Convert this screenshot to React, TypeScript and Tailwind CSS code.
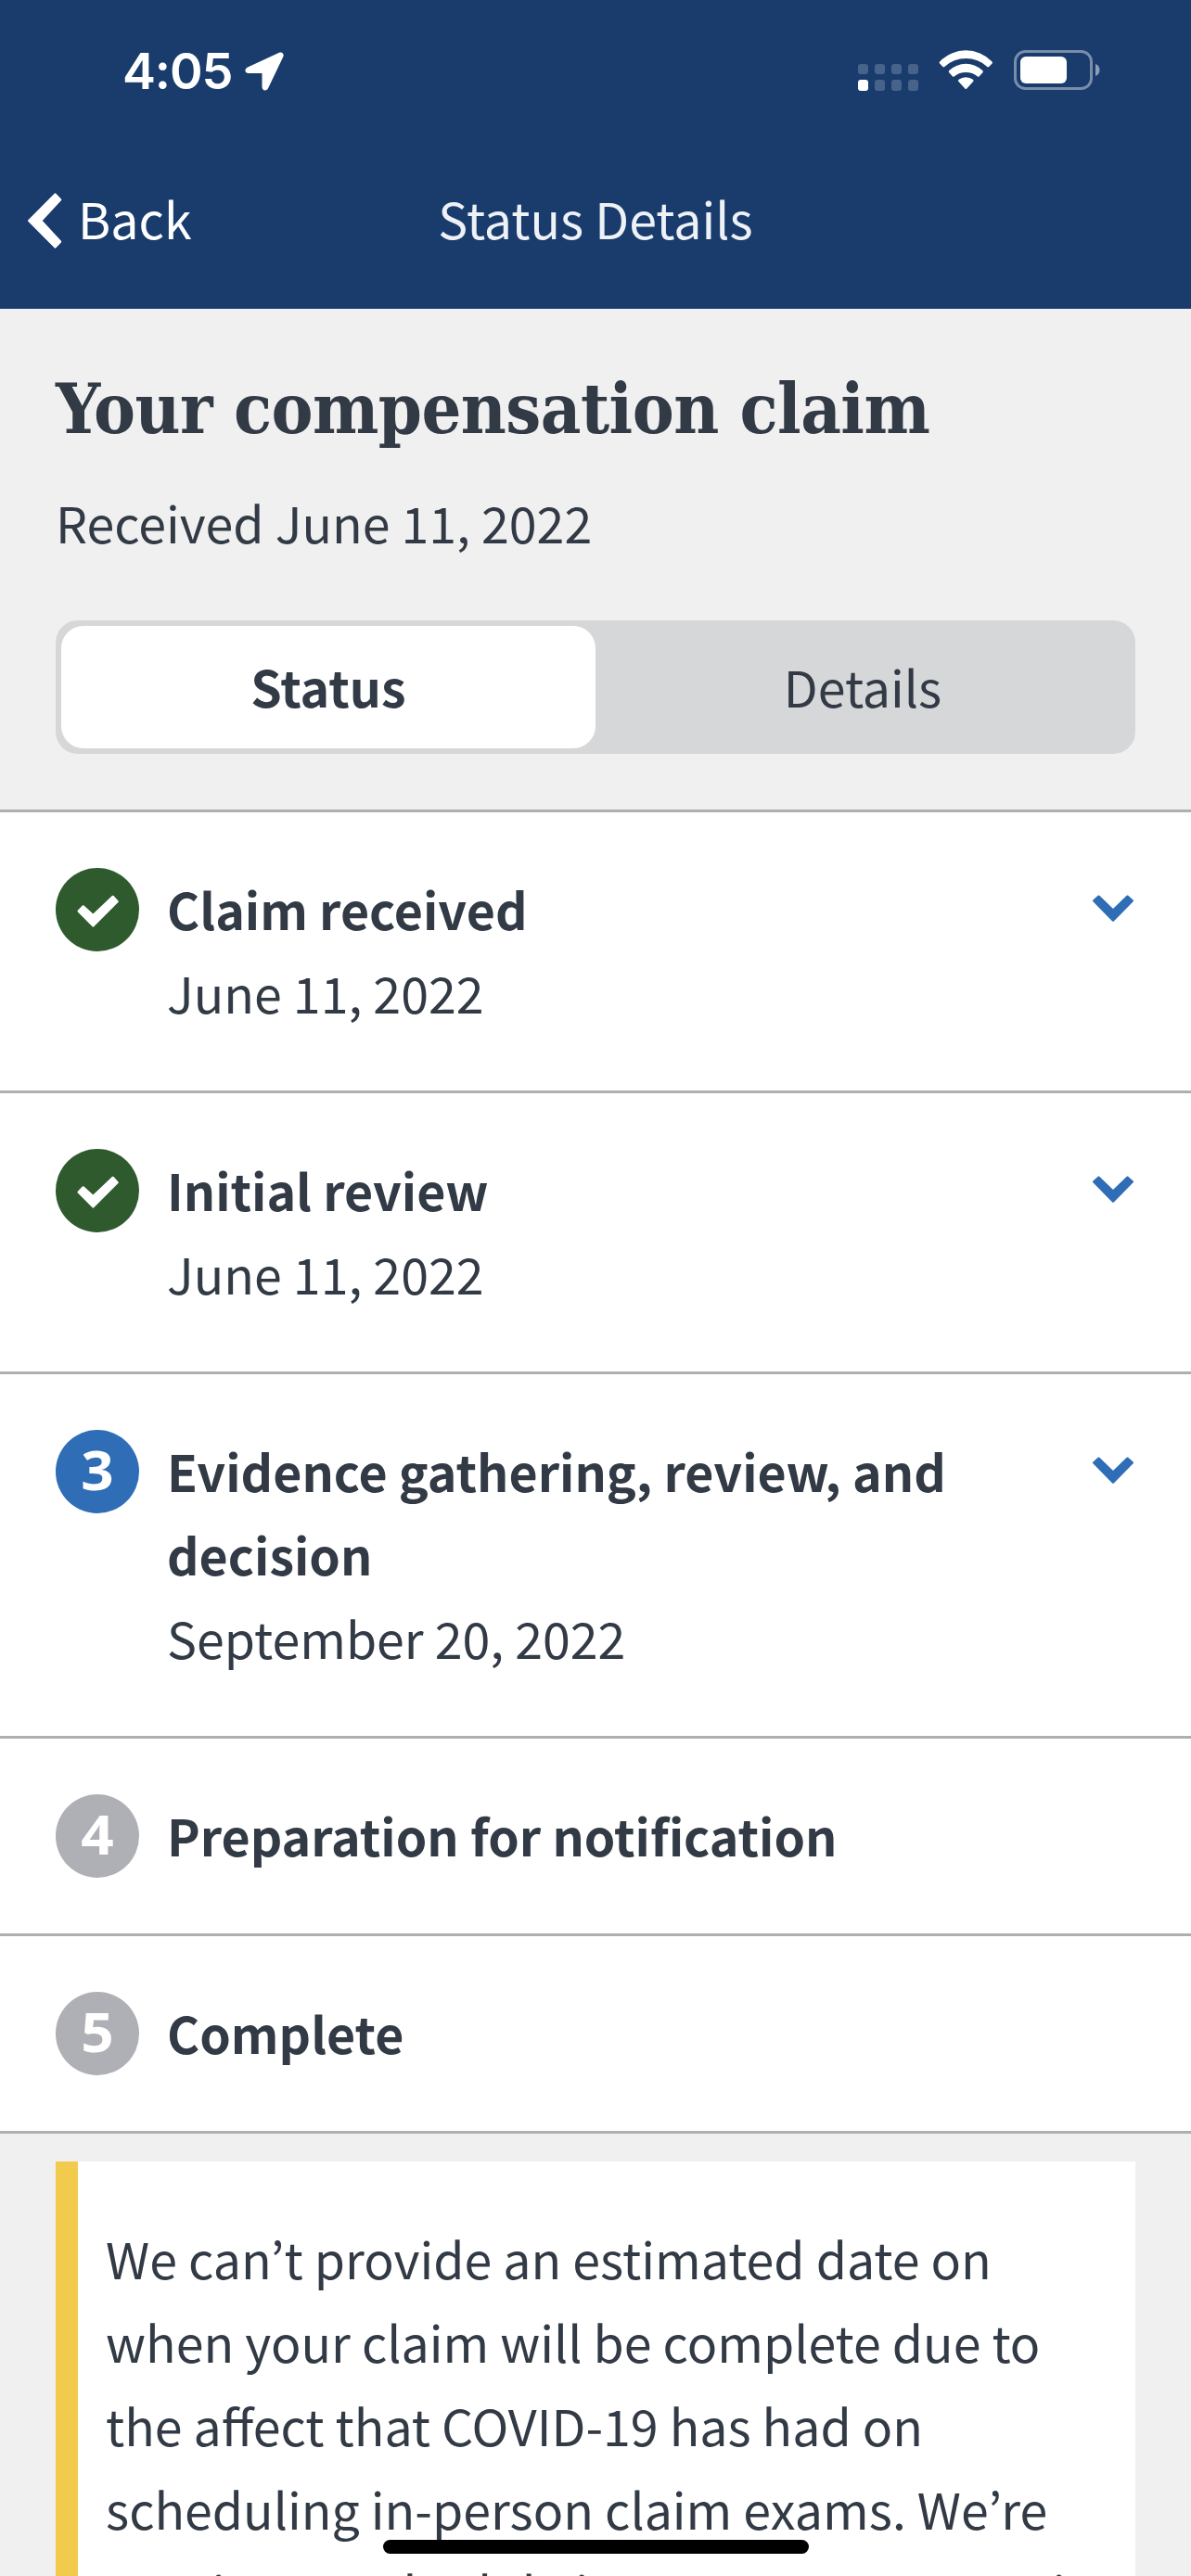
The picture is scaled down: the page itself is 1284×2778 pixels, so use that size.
import { useState } from "react";

type Phase = {
  step: number;
  title: string;
  date?: string;
  state: "done" | "current" | "upcoming";
};

const phases: Phase[] = [
  { step: 1, title: "Claim received", date: "June 11, 2022", state: "done" },
  { step: 2, title: "Initial review", date: "June 11, 2022", state: "done" },
  {
    step: 3,
    title: "Evidence gathering, review, and decision",
    date: "September 20, 2022",
    state: "current",
  },
  { step: 4, title: "Preparation for notification", state: "upcoming" },
  { step: 5, title: "Complete", state: "upcoming" },
];

const badgeColors = {
  done: "bg-[#2e5a2e]",
  current: "bg-[#2f6eb6]",
  upcoming: "bg-[#aeb0b5]",
};

// Solid icon shape, the thin stroke only rounds its corners
function SolidIcon({
  width,
  height,
  points,
  className,
}: {
  width: number;
  height: number;
  points: string;
  className?: string;
}) {
  return (
    <svg
      width={width}
      height={height}
      viewBox={`0 0 ${width} ${height}`}
      className={className}
    >
      <polygon
        points={points}
        fill="currentColor"
        stroke="currentColor"
        strokeWidth="2.4"
        strokeLinejoin="round"
      />
    </svg>
  );
}

function StatusBar() {
  return (
    <div className="flex h-[144px] items-start justify-between pt-[52px] pr-[98px] pl-[132px] text-white">
      <div className="flex items-start">
        <span className="w-[132px] font-[Inter] text-[54px] leading-[50px] font-semibold tracking-[-1.1px]">
          4:05
        </span>
        <svg width="42" height="42" viewBox="0 0 42 42" className="mt-1">
          <path
            d="M37 .8 3 16.4c-4 2-3.200 6.600 1.200 6.600h14.300v14.500c0 4.700 5.200 5.200 6.800 1.200L41.400 5c1.100-3-1.400-5.600-4.400-4.200Z"
            fill="currentColor"
          />
        </svg>
      </div>
      <svg width="262" height="54" viewBox="0 0 262 54">
        {/* cellular dots, two rows for dual sim */}
        {[0, 1, 2, 3].map((i) => (
          <g key={i} fill="#fff">
            <rect x={1 + i * 18} y="17" width="11" height="11" rx="3" opacity="0.2" />
            <rect
              x={1 + i * 18}
              y="34"
              width="11"
              height="12"
              rx="3"
              opacity={i === 0 ? 1 : 0.2}
            />
          </g>
        ))}
        <g fill="#fff">
          <path d="M89.300 14.200A39 39 0 0 1 145.300 14.200Q146.500 15.400 145.500 16.500L142.200 20Q141.300 20.900 140.300 20A34 34 0 0 0 94.300 20Q93.300 20.900 92.400 20L89.100 16.500Q88.100 15.400 89.300 14.200Z" />
          <path d="M99.300 24A26 26 0 0 1 135.300 24Q136.500 25.100 135.400 26.300L131.800 30.300Q130.900 31.300 129.900 30.400A20 20 0 0 0 104.700 30.400Q103.700 31.300 102.800 30.300L99.200 26.300Q98.100 25.100 99.300 24Z" />
          <path d="M109.600 33.800A13 13 0 0 1 125 33.800Q126.300 34.900 125.100 36.100L118.300 43.400Q117.300 44.400 116.300 43.400L109.500 36.100Q108.300 34.900 109.600 33.800Z" />
        </g>
        <rect
          x="170.500"
          y="3.500"
          width="82"
          height="40"
          rx="11"
          fill="none"
          stroke="#fff"
          strokeOpacity="0.42"
          strokeWidth="3"
        />
        <rect x="176" y="9" width="50" height="29" rx="6" fill="#fff" />
        <path d="M257 17c6 2 6 11 0 13Z" fill="#fff" opacity="0.5" />
      </svg>
    </div>
  );
}

function NavBar() {
  return (
    <div className="grid h-[189px] grid-cols-3 items-center pb-[8px] text-white">
      <button className="flex items-center gap-[17px] pl-[29px] text-left">
        <SolidIcon
          width={38}
          height={62}
          points="2.200,31 30.500,2.500 36,8.400 15.200,31 36,53.600 30.500,59.500"
          className="mt-[6px]"
        />
        <span>Back</span>
      </button>
      <span className="text-center text-[#eef1f6]">Status Details</span>
    </div>
  );
}

function PhaseRow({ phase }: { phase: Phase }) {
  return (
    <div className="flex border-b-[3px] border-[#aeb0b0] bg-white p-[60px]">
      <div
        className={`flex h-[90px] w-[90px] shrink-0 items-center justify-center rounded-full text-white ${badgeColors[phase.state]}`}
      >
        {phase.state === "done" ? (
          <SolidIcon
            width={46}
            height={36}
            points="1.700,17.600 6.700,12.400 17.400,22.200 38.700,1.900 43.600,7.200 17.400,33.500"
            className="mt-[3px] ml-[2px]"
          />
        ) : (
          <span className="scale-x-105 pr-px pb-[5px] font-['Noto_Sans',sans-serif] text-[59px] leading-[85px] font-bold">
            {phase.step}
          </span>
        )}
      </div>
      <div className="ml-[30px] w-[880px] -translate-y-px">
        <p className="font-bold">{phase.title}</p>
        {phase.date && <p>{phase.date}</p>}
      </div>
      {phase.state !== "upcoming" && (
        <SolidIcon
          width={46}
          height={30}
          points="2.200,6.500 7.500,1.700 23,16.600 38.500,1.700 43.800,6.500 23,27.600"
          className="mt-[29px] mr-px ml-auto text-[#2f6eb6]"
        />
      )}
    </div>
  );
}

export default function App() {
  const [tab, setTab] = useState("Status");

  return (
    <div className="relative h-[2778px] w-[1284px] overflow-hidden bg-[#f0f0f0] font-['Noto_Sans_CJK_KR','Noto_Sans',sans-serif] text-[53.700px] leading-[90px] text-[#323a45]">
      <header className="h-[333px] bg-[#193c6d]">
        <StatusBar />
        <NavBar />
      </header>

      <section className="border-b-[3px] border-[#aeb0b0] px-[60px] pt-[60px] pb-[60px]">
        <h1 className="h-[99px] font-['DejaVu_Serif_Condensed','DejaVu_Serif',serif] text-[75px] leading-[97px] font-bold tracking-[-0.550px] whitespace-nowrap">
          Your compensation claim
        </h1>
        <p className="mt-[26px] mb-[61px]">Received June 11, 2022</p>
        <div className="flex h-[144px] rounded-[24px] bg-[#d6d7d9] p-[6px]">
          {["Status", "Details"].map((name) => (
            <button
              key={name}
              onClick={() => setTab(name)}
              className={`flex-1 rounded-[24px] pb-[2px] ${tab === name ? "bg-white font-bold" : ""}`}
            >
              {name}
            </button>
          ))}
        </div>
      </section>

      <section>
        {phases.map((phase) => (
          <PhaseRow key={phase.step} phase={phase} />
        ))}
      </section>

      <section className="mx-[60px] mt-[30px] border-l-[24px] border-[#f2ca4c] bg-white pt-[59px] pr-[36px] pb-[60px] pl-[30px]">
        <p>
          We can’t provide an estimated date on when your claim will be complete
          due to the affect that COVID-19 has had on scheduling in-person claim
          exams. We’re starting to schedule in-person exams again in many
          locations.
        </p>
      </section>

      {/* home indicator */}
      <div className="absolute top-[2739px] left-[413px] h-[15px] w-[459px] rounded-full bg-black" />
    </div>
  );
}
